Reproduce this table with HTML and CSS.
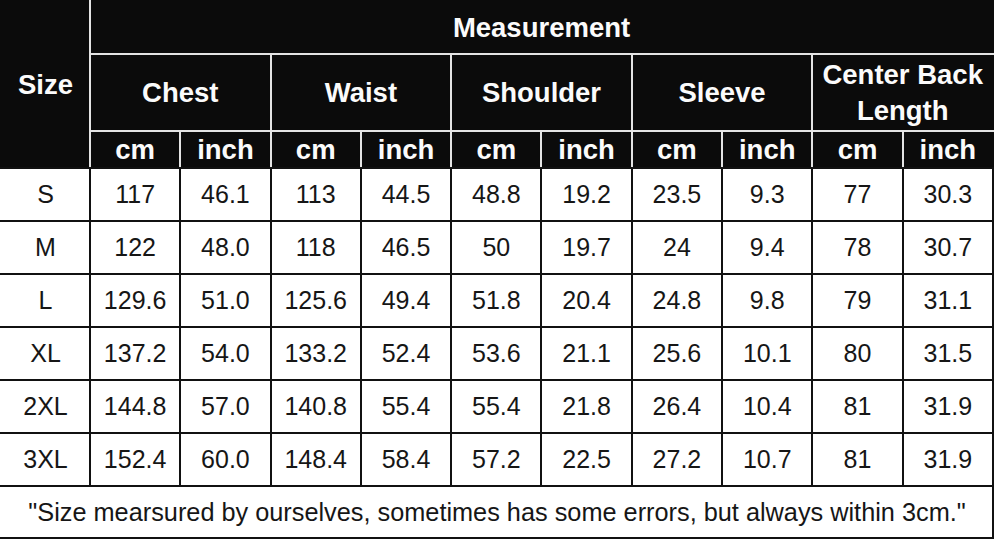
FILE: index.html
```html
<!DOCTYPE html>
<html>
<head>
<meta charset="utf-8">
<link rel="stylesheet" href="styles.css">
</head>
<body>
<table class="sizes">
  <colgroup>
    <col class="c-size">
    <col span="10" class="c-val">
  </colgroup>
  <thead>
    <tr class="h1">
      <th rowspan="3" class="h-size">Size</th>
      <th colspan="10" class="h-meas">Measurement</th>
    </tr>
    <tr class="h2">
      <th colspan="2">Chest</th>
      <th colspan="2">Waist</th>
      <th colspan="2">Shoulder</th>
      <th colspan="2">Sleeve</th>
      <th colspan="2" class="h-last">Center Back<br>Length</th>
    </tr>
    <tr class="h3">
      <th>cm</th><th>inch</th>
      <th>cm</th><th>inch</th>
      <th>cm</th><th>inch</th>
      <th>cm</th><th>inch</th>
      <th>cm</th><th class="h-last">inch</th>
    </tr>
  </thead>
  <tbody>
    <tr><td>S</td><td>117</td><td>46.1</td><td>113</td><td>44.5</td><td>48.8</td><td>19.2</td><td>23.5</td><td>9.3</td><td>77</td><td>30.3</td></tr>
    <tr><td>M</td><td>122</td><td>48.0</td><td>118</td><td>46.5</td><td>50</td><td>19.7</td><td>24</td><td>9.4</td><td>78</td><td>30.7</td></tr>
    <tr><td>L</td><td>129.6</td><td>51.0</td><td>125.6</td><td>49.4</td><td>51.8</td><td>20.4</td><td>24.8</td><td>9.8</td><td>79</td><td>31.1</td></tr>
    <tr><td>XL</td><td>137.2</td><td>54.0</td><td>133.2</td><td>52.4</td><td>53.6</td><td>21.1</td><td>25.6</td><td>10.1</td><td>80</td><td>31.5</td></tr>
    <tr><td>2XL</td><td>144.8</td><td>57.0</td><td>140.8</td><td>55.4</td><td>55.4</td><td>21.8</td><td>26.4</td><td>10.4</td><td>81</td><td>31.9</td></tr>
    <tr><td>3XL</td><td>152.4</td><td>60.0</td><td>148.4</td><td>58.4</td><td>57.2</td><td>22.5</td><td>27.2</td><td>10.7</td><td>81</td><td>31.9</td></tr>
    <tr class="note"><td colspan="11">"Size mearsured by ourselves, sometimes has some errors, but always within 3cm."</td></tr>
  </tbody>
</table>
</body>
</html>
```

FILE: styles.css
```css
html, body {
  margin: 0;
  padding: 0;
  background: #ffffff;
}

body {
  font-family: "Liberation Sans", Arial, Helvetica, sans-serif;
}

.sizes {
  border-collapse: collapse;
  table-layout: fixed;
  width: 992px;
}

.c-size { width: 89px; }
.c-val { width: 90.3px; }

.sizes th,
.sizes td {
  padding: 0;
  text-align: center;
  vertical-align: middle;
}

.sizes th {
  background: #0b0b0b;
  color: #fbfbfb;
  font-weight: bold;
  font-size: 27.5px;
  line-height: 1.3;
  border: 2px solid #e4e4e4;
}

.h1 th { height: 51px; border-top-color: #0b0b0b; }
.h2 th { height: 75px; }
.h3 th { height: 35px; border-bottom-color: #111111; line-height: 1; }

.h-size {
  border-left-color: #0b0b0b !important;
  border-bottom-color: #111111 !important;
  padding-bottom: 4px;
}

.h-meas { border-right-color: #0b0b0b !important; }
.h-last { border-right-color: #0b0b0b !important; }

.sizes td {
  height: 51px;
  font-size: 25px;
  color: #161616;
  border: 2px solid #111111;
}

.sizes tbody tr td:first-child { border-left-color: #ffffff; }

.note td {
  height: 50px;
  font-size: 25.3px;
  border-left-color: #ffffff;
}
```
